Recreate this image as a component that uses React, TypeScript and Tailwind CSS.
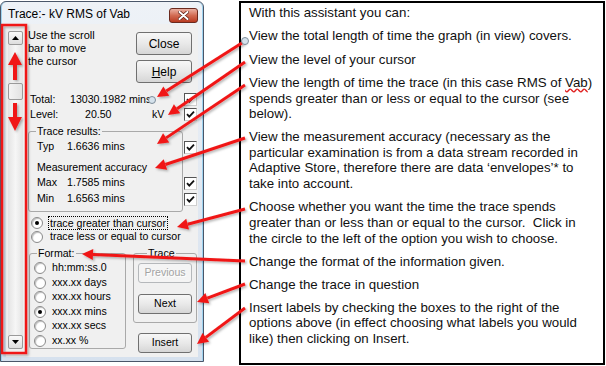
import React from 'react';

const ARROWS: [number, number, number, number][] = [
  [245, 41, 157, 97],
  [245, 62, 168, 115],
  [245, 85, 157, 144],
  [245, 138, 155, 168],
  [245, 209, 177, 227],
  [245, 261, 82, 254],
  [245, 284, 197, 302],
  [245, 308, 197, 344],
];

function headPoints(x1: number, y1: number, x2: number, y2: number, len = 11, w = 5.5) {
  const dx = x2 - x1;
  const dy = y2 - y1;
  const d = Math.hypot(dx, dy);
  const ux = dx / d;
  const uy = dy / d;
  const bx = x2 - ux * len;
  const by = y2 - uy * len;
  return {
    base: [bx, by],
    points: `${x2},${y2} ${bx - uy * w},${by + ux * w} ${bx + uy * w},${by - ux * w}`,
  };
}

function Checkbox() {
  return (
    <span className="w-[13px] h-[13px] shrink-0 bg-white border border-t-[#555] border-l-[#555] border-b-[#cfcfcf] border-r-[#cfcfcf] flex items-center justify-center">
      <svg width="9" height="9" viewBox="0 0 9 9">
        <path d="M1 4.2 L3.3 6.6 L8 1.6" fill="none" stroke="#111" strokeWidth="1.8" />
      </svg>
    </span>
  );
}

function Radio({ checked = false }: { checked?: boolean }) {
  return (
    <span className="w-[12px] h-[12px] shrink-0 rounded-full bg-white border border-[#8a8a8a] shadow-[inset_1px_1px_1px_rgba(0,0,0,0.25)] flex items-center justify-center">
      {checked && <span className="w-[4px] h-[4px] rounded-full bg-black" />}
    </span>
  );
}

function Btn({ children, disabled = false, className = '' }: { children: React.ReactNode; disabled?: boolean; className?: string }) {
  return (
    <div
      className={`flex items-center justify-center rounded-[3px] border ${
        disabled
          ? 'border-[#b5b8bb] bg-[#f4f4f4] text-[#a3a3a3] [text-shadow:1px_1px_0_#fff]'
          : 'border-[#707070] bg-gradient-to-b from-[#f7f7f7] via-[#e9e9e9] to-[#d6d6d6] text-black'
      } ${className}`}
    >
      {children}
    </div>
  );
}

function ScrollBtn({ up }: { up?: boolean }) {
  return (
    <div className="h-[14px] w-[15px] rounded-[2px] border border-[#9a9a9a] bg-gradient-to-b from-[#fafafa] to-[#dedede] flex items-center justify-center">
      <svg width="7" height="4" viewBox="0 0 7 4">
        <path d={up ? 'M0 4 L3.5 0 L7 4 Z' : 'M0 0 L3.5 4 L7 0 Z'} fill="#000" />
      </svg>
    </div>
  );
}

function Legend({ children }: { children: React.ReactNode }) {
  return <legend className="ml-[7px] px-[1px] leading-[13px]">{children}</legend>;
}

export default function App() {
  return (
    <div className="relative w-[606px] h-[366px] overflow-hidden bg-white flex items-start font-['Liberation_Sans',Arial,sans-serif]">
      {/* dialog window */}
      <div className="mt-[1px] w-[204px] h-[361px] shrink-0 flex flex-col border border-[#4a5669] rounded-t-[6px] bg-gradient-to-b from-[#eef2f7] via-[#e2e9f2] to-[#d6e1ee] shadow-[inset_1px_0_0_#9fd3ef,inset_-1px_0_0_#9fd3ef]">
        <div className="h-[22px] flex items-start">
          <span className="pl-[7px] pt-[5px] leading-[14px] text-[12px] text-black">Trace:- kV RMS of Vab</span>
          <div className="ml-auto mr-[5px] mt-[6px] w-[29px] h-[15px] rounded-[3px] border border-[#6b2a1e] bg-gradient-to-b from-[#eab0a2] via-[#d26b52] to-[#b8391f] flex items-center justify-center">
            <svg width="11" height="9" viewBox="0 0 11 9">
              <path d="M1.5 1 L9.5 8 M9.5 1 L1.5 8" stroke="#5a1a10" strokeWidth="3.4" strokeLinecap="round" />
              <path d="M1.5 1 L9.5 8 M9.5 1 L1.5 8" stroke="#fff" strokeWidth="2" strokeLinecap="round" />
            </svg>
          </div>
        </div>

        <div className="mx-[5px] h-[333px] bg-[#f0f0f0] flex items-start pl-[2px] text-[10.6px] text-black">
          {/* scrollbar */}
          <div className="mt-[7px] w-[15px] h-[318px] flex flex-col bg-gradient-to-r from-[#e4e4e4] via-[#f6f6f6] to-[#e4e4e4]">
            <ScrollBtn up />
            <div className="h-[38px]" />
            <div className="h-[17px] w-[15px] rounded-[2px] border border-[#9a9a9a] bg-gradient-to-r from-[#f4f4f4] to-[#e2e2e2]" />
            <div className="flex-1" />
            <ScrollBtn />
          </div>

          {/* content */}
          <div className="ml-[5px] mt-[2px] w-[170px] flex flex-col">
            <div className="h-[62px] flex">
              <div className="pt-[3px] leading-[13px] text-[11px]">
                Use the scroll
                <br />
                bar to move
                <br />
                the cursor
              </div>
              <div className="ml-auto mr-[6px] pt-[6px] flex flex-col">
                <Btn className="w-[56px] h-[23px] text-[12px]">Close</Btn>
                <Btn className="mt-[5px] w-[56px] h-[23px] text-[12px]">
                  <span>
                    <span className="underline">H</span>elp
                  </span>
                </Btn>
              </div>
            </div>

            <div className="mt-[4px] h-[15px] flex items-center pl-[2px]">
              <span className="w-[40px]">Total:</span>
              <span>13030.1982 mins</span>
              <span className="ml-auto mr-[1px]">
                <Checkbox />
              </span>
            </div>
            <div className="h-[15px] flex items-center pl-[2px]">
              <span className="w-[55px]">Level:</span>
              <span className="w-[67px]">20.50</span>
              <span>kV</span>
              <span className="ml-auto mr-[1px]">
                <Checkbox />
              </span>
            </div>

            <div className="mt-[3px] flex">
              <fieldset className="w-[155px] h-[87px] border border-[#a9a9a9] rounded-[3px]">
                <Legend>Trace results:</Legend>
                <div className="mt-[1.5px] h-[15px] flex items-center pl-[8px]">
                  <span className="w-[30px]">Typ</span>
                  <span>1.6636 mins</span>
                </div>
                <div className="mt-[6px] h-[15px] flex items-center pl-[8px]">Measurement accuracy</div>
                <div className="h-[15px] flex items-center pl-[8px]">
                  <span className="w-[30px]">Max</span>
                  <span>1.7585 mins</span>
                </div>
                <div className="mt-[1px] h-[15px] flex items-center pl-[8px]">
                  <span className="w-[30px]">Min</span>
                  <span>1.6563 mins</span>
                </div>
              </fieldset>
              <div className="ml-[1px] flex flex-col">
                <div className="mt-[16px]">
                  <Checkbox />
                </div>
                <div className="mt-[23px]">
                  <Checkbox />
                </div>
                <div className="mt-[3px]">
                  <Checkbox />
                </div>
              </div>
            </div>

            <div className="mt-[4px] h-[14px] flex items-center pl-[3px]">
              <Radio checked />
              <span className="ml-[5px] px-[1px] leading-[12px] border border-dotted border-black">trace greater than cursor</span>
            </div>
            <div className="h-[14px] flex items-center pl-[3px]">
              <Radio />
              <span className="ml-[6px] px-[1px]">trace less or equal to cursor</span>
            </div>

            <div className="mt-[3px] flex items-start">
              <fieldset className="ml-[1px] w-[97px] h-[102px] border border-[#a9a9a9] rounded-[3px]">
                <Legend>Format:</Legend>
                {['hh:mm:ss.0', 'xxx.xx days', 'xxx.xx hours', 'xxx.xx mins', 'xxx.xx secs', 'xx.xx %'].map((label, i) => (
                  <div key={label} className={`h-[14.6px] flex items-center pl-[4px] ${i === 0 ? 'mt-[0.7px]' : ''}`}>
                    <Radio checked={i === 3} />
                    <span className="ml-[6px]">{label}</span>
                  </div>
                ))}
              </fieldset>
              <div className="ml-[7px] w-[64px] flex flex-col">
                <fieldset className="h-[76px] border border-[#a9a9a9] rounded-[3px] pl-[4px]">
                  <legend className="ml-[9px] px-[1px] leading-[13px]">Trace</legend>
                  <Btn disabled className="mt-[3px] w-[54px] h-[20px]">Previous</Btn>
                  <Btn className="mt-[11px] w-[54px] h-[20px]">Next</Btn>
                </fieldset>
                <Btn className="mt-[10px] ml-[5px] w-[54px] h-[20px]">Insert</Btn>
              </div>
            </div>
          </div>
        </div>
      </div>

      {/* explanation box */}
      <div className="ml-[35px] mt-[1px] w-[366px] h-[364px] border-2 border-black bg-white pl-[8px] pt-[2.2px] text-[13.3px] leading-[15.7px] text-[#111]">
        <p>With this assistant you can:</p>
        <p className="mt-[7.5px]">View the total length of time the graph (in view) covers.</p>
        <p className="mt-[7.5px]">View the level of your cursor</p>
        <p className="mt-[7.5px]">
          View the length of time the trace (in this case RMS of{' '}
          <span className="underline decoration-wavy decoration-[#e02020]">Vab</span>)
          <br />
          spends greater than or less or equal to the cursor (see
          <br />
          below).
        </p>
        <p className="mt-[7px]">
          View the measurement accuracy (necessary as the
          <br />
          particular examination is from a data stream recorded in
          <br />
          Adaptive Store, therefore there are data ‘envelopes’* to
          <br />
          take into account.
        </p>
        <p className="mt-[7.5px]">
          Choose whether you want the time the trace spends
          <br />
          greater than or less than or equal to the cursor.&nbsp; Click in
          <br />
          the circle to the left of the option you wish to choose.
        </p>
        <p className="mt-[7.5px]">Change the format of the information given.</p>
        <p className="mt-[7px]">Change the trace in question</p>
        <p className="mt-[7.5px]">
          Insert labels by checking the boxes to the right of the
          <br />
          options above (in effect choosing what labels you would
          <br />
          like) then clicking on Insert.
        </p>
      </div>

      {/* annotation overlay */}
      <svg className="absolute left-0 top-0 pointer-events-none" width="606" height="366" viewBox="0 0 606 366">
        <defs>
          <filter id="sh" x="-20%" y="-20%" width="140%" height="140%">
            <feDropShadow dx="1.5" dy="1.5" stdDeviation="1" floodColor="#000" floodOpacity="0.3" />
          </filter>
        </defs>
        <g filter="url(#sh)">
          <rect x="2" y="25" width="24" height="328" fill="none" stroke="#f01818" strokeWidth="2.5" />
          <rect x="13" y="64" width="4" height="16" fill="#f01818" />
          <polygon points="15,52 8,65 22,65" fill="#f01818" />
          <rect x="13" y="103" width="4" height="15" fill="#f01818" />
          <polygon points="15,131 8,117 22,117" fill="#f01818" />
          {ARROWS.map(([x1, y1, x2, y2], i) => {
            const h = headPoints(x1, y1, x2, y2);
            return (
              <g key={i}>
                <line x1={x1} y1={y1} x2={h.base[0]} y2={h.base[1]} stroke="#f01818" strokeWidth="3" />
                <polygon points={h.points} fill="#f01818" />
              </g>
            );
          })}
        </g>
        <circle cx="245" cy="41" r="3.5" fill="#d5e2ec" stroke="#7d8c99" strokeWidth="1" />
        <circle cx="152" cy="100" r="3.5" fill="#d5e2ec" stroke="#7d8c99" strokeWidth="1" />
      </svg>
    </div>
  );
}
